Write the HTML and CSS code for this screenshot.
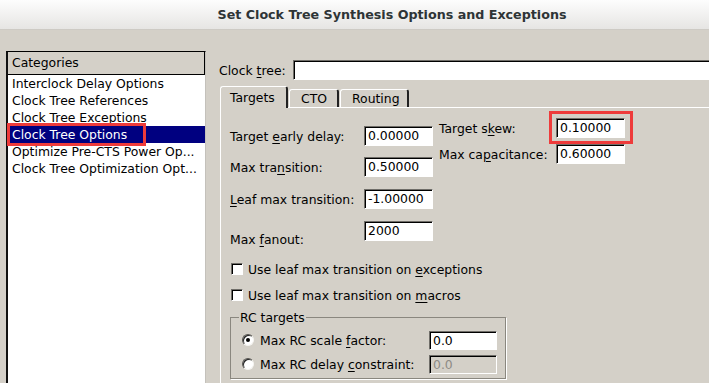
FILE: index.html
```html
<!DOCTYPE html>
<html>
<head>
<meta charset="utf-8">
<link rel="stylesheet" href="styles.css">
</head>
<body>
<div class="titlebar">Set Clock Tree Synthesis Options and Exceptions</div>
<div class="main">
  <div class="catlist">
    <div class="cathead">Categories</div>
    <div class="item">Interclock Delay Options</div>
    <div class="item">Clock Tree References</div>
    <div class="item">Clock Tree Exceptions</div>
    <div class="item selected">Clock Tree Options<span class="redbox listbox-mark"></span></div>
    <div class="item">Optimize Pre-CTS Power Op...</div>
    <div class="item">Clock Tree Optimization Opt...</div>
  </div>
  <div class="right">
    <div class="clockrow">
      <span class="clocklabel">Clock <u>t</u>ree:</span>
      <div class="entry clockentry"></div>
    </div>
    <div class="tabs">
      <div class="tabbar">
        <div class="tab active">Targets</div>
        <div class="tab cto">CTO</div>
        <div class="tab routing">Routing</div>
      </div>
      <div class="panel">
        <div class="topsec">
          <div class="leftgrid">
            <span class="lbl">Target <u>e</u>arly delay:</span>
            <div class="entry">0.00000</div>
            <span class="lbl">Max tra<u>n</u>sition:</span>
            <div class="entry">0.50000</div>
            <span class="lbl"><u>L</u>eaf max transition:</span>
            <div class="entry">-1.00000</div>
            <span class="lbl low">Max <u>f</u>anout:</span>
            <div class="entry">2000</div>
          </div>
          <div class="rightgrid">
            <span class="lbl">Target s<u>k</u>ew:</span>
            <div class="entry marked">0.10000<span class="redbox skew-mark"></span></div>
            <span class="lbl">Max ca<u>p</u>acitance:</span>
            <div class="entry">0.60000</div>
          </div>
        </div>
        <div class="checks">
          <div class="checkrow"><span class="checkbox"></span><span>Use leaf max transition on <u>e</u>xceptions</span></div>
          <div class="checkrow"><span class="checkbox"></span><span>Use leaf max transition on <u>m</u>acros</span></div>
        </div>
        <fieldset class="group">
          <legend>RC targets</legend>
          <div class="rcgrid">
            <div class="radiorow"><span class="radio checked"></span><span>Max RC scale <u>f</u>actor:</span></div>
            <div class="entry rcentry">0.0</div>
            <div class="radiorow"><span class="radio"></span><span>Max RC delay <u>c</u>onstraint:</span></div>
            <div class="entry rcentry disabled">0.0</div>
          </div>
        </fieldset>
      </div>
    </div>
  </div>
</div>
</body>
</html>
```
FILE: styles.css
```css
* { box-sizing: border-box; }
html, body {
  margin: 0;
  width: 709px;
  height: 383px;
  overflow: hidden;
}
body {
  background: #d4d0c8;
  font-family: "DejaVu Sans", sans-serif;
  font-size: 12.4px;
  color: #000;
}
u { text-decoration: underline; text-underline-offset: 2px; }

.titlebar {
  height: 30px;
  background: linear-gradient(#fdfdfd, #e6e5e3);
  border-bottom: 1px solid #cdcac4;
  text-align: center;
  padding-left: 75px;
  font-weight: bold;
  font-size: 12.7px;
  line-height: 29px;
  color: #2e3436;
  white-space: nowrap;
}

.main {
  display: flex;
  padding-top: 21px;
  height: 353px;
}

.catlist {
  flex: none;
  margin-left: 6px;
  width: 200px;
  height: 340px;
  background: #fff;
  border-left: 2px solid #111;
  border-top: 1px solid #000;
  border-right: 1px solid #c4c1bb;
}
.cathead {
  height: 23px;
  background: #d4d0c8;
  border-right: 1px solid #000;
  border-bottom: 1px solid #000;
  padding-left: 4px;
  line-height: 22px;
}
.item {
  height: 17px;
  line-height: 17px;
  padding-left: 4px;
  white-space: nowrap;
  position: relative;
}
.item.selected {
  background: #000080;
  color: #fff;
}
.redbox {
  position: absolute;
  border: 3px solid #ee3b3b;
  pointer-events: none;
}
.listbox-mark {
  left: -1px;
  top: -3px;
  width: 139px;
  height: 23px;
}

.right {
  flex: 1;
  padding-left: 13px;
  min-width: 0;
  overflow: hidden;
}
.clockrow {
  display: flex;
  align-items: center;
  margin-top: 9px;
  height: 20px;
}
.clocklabel {
  flex: none;
  width: 74px;
  white-space: nowrap;
}

.entry {
  height: 20px;
  background: #fff;
  border: 1px solid;
  border-color: #6f6d68 #fff #fff #6f6d68;
  box-shadow: inset 1px 1px 0 #000;
  padding-left: 3px;
  line-height: 18px;
  white-space: nowrap;
  position: relative;
}
.clockentry { width: 500px; flex: none; }

.tabs {
  margin-left: 1px;
  margin-top: 6px;
}
.tabbar {
  display: flex;
  align-items: flex-end;
  height: 21px;
}
.tab {
  height: 18px;
  background: #d4d0c8;
  border-top: 1px solid #fff;
  border-left: 1px solid #fff;
  border-right: 2px solid #222;
  border-radius: 3px 3px 0 0;
  line-height: 17px;
  white-space: nowrap;
}
.tab.active {
  width: 68px;
  height: 22px;
  padding-left: 9px;
  margin-bottom: -1px;
  position: relative;
  z-index: 1;
  line-height: 21px;
}
.tab.cto { width: 50px; padding-left: 11px; margin-left: 1px; }
.tab.routing { width: 69px; padding-left: 11px; margin-left: 1px; }

.panel {
  width: 600px;
  height: 290px;
  border-top: 1px solid #fff;
  border-left: 1px solid #fff;
  padding-left: 9px;
}

.topsec {
  display: flex;
  align-items: flex-start;
}
.leftgrid {
  display: grid;
  grid-template-columns: 134px 69px;
  grid-template-rows: 20px 21px 21px 21px;
  row-gap: 11px;
  margin-top: 18px;
}
.lbl {
  align-self: center;
  white-space: nowrap;
}
.lbl.low {
  align-self: end;
  margin-bottom: -5px;
}
.rightgrid {
  display: grid;
  grid-template-columns: 117px 69px;
  grid-template-rows: 20px 20px;
  row-gap: 6px;
  margin-top: 10px;
  margin-left: 6px;
}
.skew-mark {
  left: -8px;
  top: -8px;
  width: 84px;
  height: 33px;
}

.checks {
  margin-top: 14px;
}
.checkrow {
  display: flex;
  align-items: center;
  height: 26px;
  white-space: nowrap;
}
.checkbox {
  width: 12px;
  height: 12px;
  margin-left: 1px;
  margin-right: 5px;
  background: #fff;
  border: 1px solid;
  border-color: #6f6d68 #fff #fff #6f6d68;
  box-shadow: inset 1px 1px 0 #000;
}

.group {
  margin: 2px 0 0 0;
  width: 276px;
  padding: 0 0 2px 11px;
  border: 1px solid #8a877f;
  box-shadow: 1px 1px 0 #fff;
}
.group legend {
  padding: 0 1px;
  margin-left: -3px;
  line-height: 15px;
}
.rcgrid {
  display: grid;
  grid-template-columns: 187px 68px;
  grid-template-rows: 24px 24px;
  align-items: center;
  margin-top: 3px;
}
.radiorow {
  display: flex;
  align-items: center;
  white-space: nowrap;
}
.radio {
  width: 12px;
  height: 12px;
  border-radius: 50%;
  margin-right: 6px;
  background: #fff;
  border: 1px solid;
  border-color: #55534f #f4f3f0 #f4f3f0 #55534f;
  box-shadow: inset 1px 1px 0 #222;
  position: relative;
}
.radio.checked::after {
  content: "";
  position: absolute;
  left: 3px;
  top: 3px;
  width: 4px;
  height: 4px;
  border-radius: 50%;
  background: #000;
}
.rcentry { height: 19px; line-height: 17px; }
.rcentry.disabled {
  background: #d4d0c8;
  color: #8e8b85;
}
```
